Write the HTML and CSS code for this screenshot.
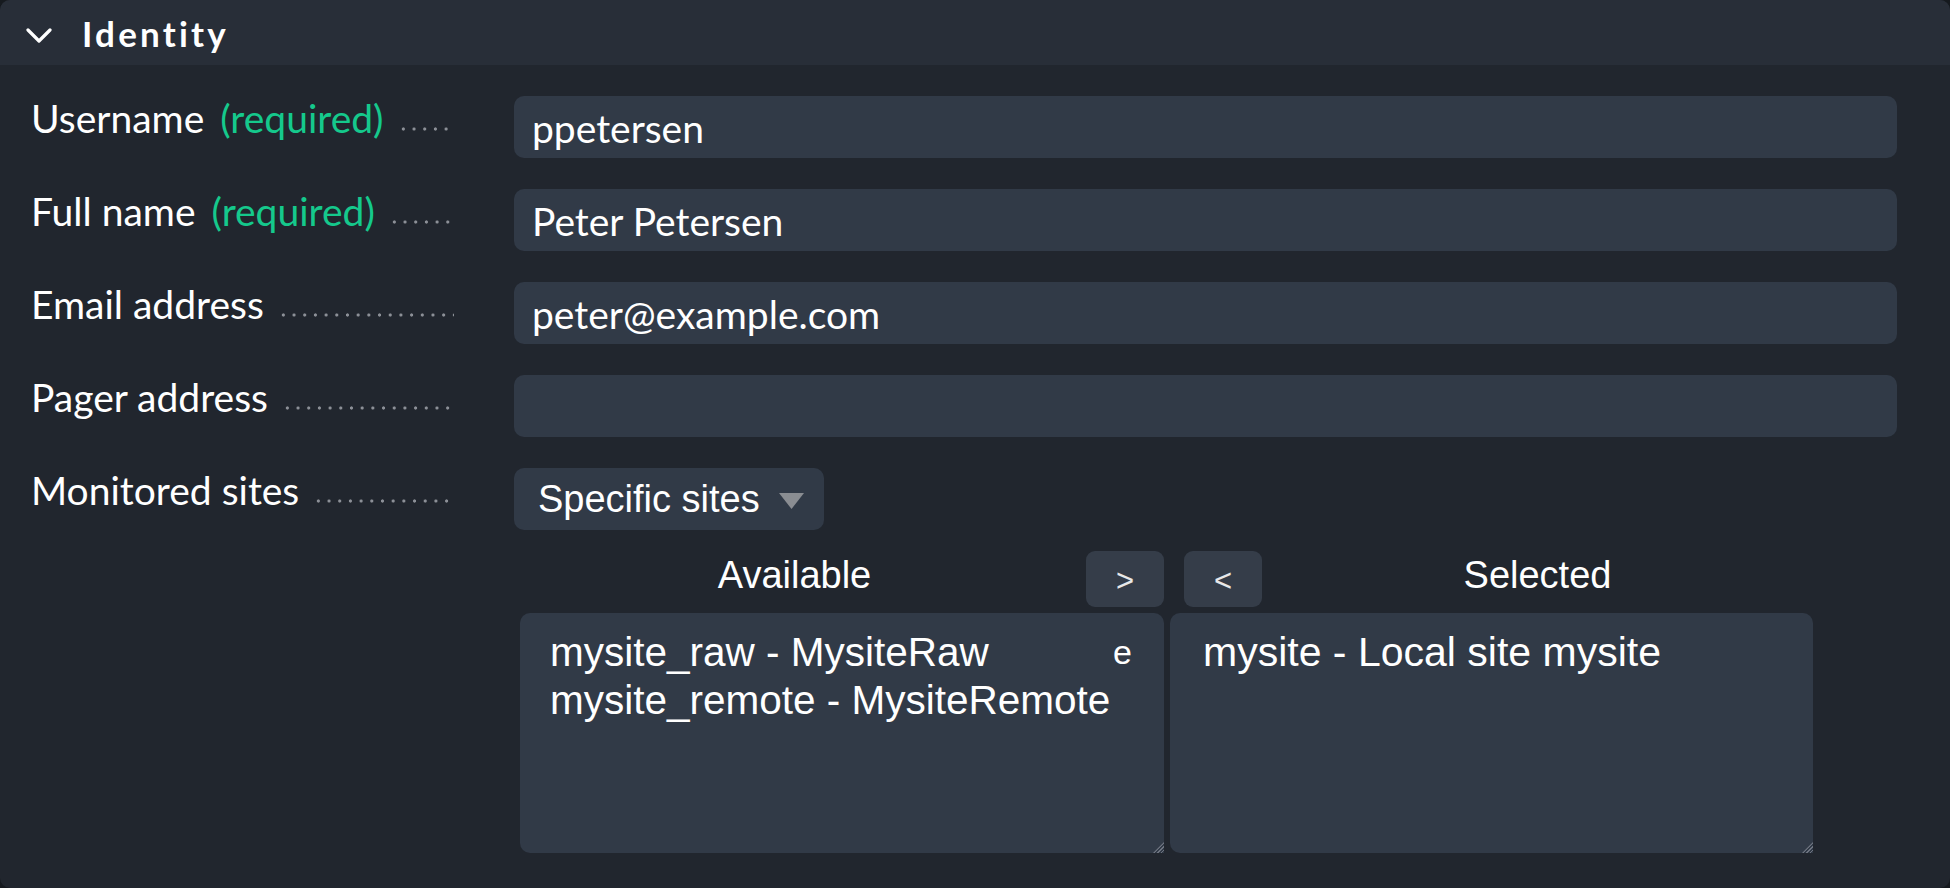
FILE: index.html
```html
<!DOCTYPE html>
<html>
<head>
<meta charset="utf-8">
<link rel="stylesheet" href="styles.css">
</head>
<body>
<div class="panel">
  <div class="head">
    <svg class="chev" width="26" height="16" viewBox="0 0 26 16"><polyline points="2,2 13,13 24,2" fill="none" stroke="#ffffff" stroke-width="3.2" stroke-linecap="round" stroke-linejoin="round"/></svg>
    <span class="title">Identity</span>
  </div>
  <div class="form">
    <div class="row">
      <div class="label"><span class="ltext">Username <span class="req">(required)</span></span><span class="dots"></span></div>
      <div class="field"><div class="input">ppetersen</div></div>
    </div>
    <div class="row">
      <div class="label"><span class="ltext">Full name <span class="req">(required)</span></span><span class="dots"></span></div>
      <div class="field"><div class="input">Peter Petersen</div></div>
    </div>
    <div class="row">
      <div class="label"><span class="ltext">Email address</span><span class="dots"></span></div>
      <div class="field"><div class="input">peter@example.com</div></div>
    </div>
    <div class="row">
      <div class="label"><span class="ltext">Pager address</span><span class="dots"></span></div>
      <div class="field"><div class="input"></div></div>
    </div>
    <div class="row">
      <div class="label"><span class="ltext">Monitored sites</span><span class="dots"></span></div>
      <div class="field">
        <div class="select"><span>Specific sites</span><svg class="caret" width="25" height="16" viewBox="0 0 25 16"><polygon points="0,0 25,0 12.5,16" fill="#8a8d92"/></svg></div>
        <div class="dual">
          <div class="col">
            <div class="colhead">
              <span class="htext avail">Available</span>
              <span class="btn">&gt;</span>
            </div>
            <div class="list">
              <div class="opt first"><span>mysite_raw - MysiteRaw</span><span class="stray">e</span></div>
              <div class="opt">mysite_remote - MysiteRemote</div>
            </div>
          </div>
          <div class="col">
            <div class="colhead">
              <span class="btn left">&lt;</span>
              <span class="htext">Selected</span>
            </div>
            <div class="list">
              <div class="opt">mysite - Local site mysite</div>
            </div>
          </div>
        </div>
      </div>
    </div>
  </div>
</div>
</body>
</html>
```
FILE: styles.css
```css
html, body {
  margin: 0;
  padding: 0;
  background: #161a1f;
}
body {
  width: 1950px;
  height: 888px;
  overflow: hidden;
}
.panel {
  width: 1950px;
  height: 888px;
  background: #21262e;
  border-radius: 10px;
  overflow: hidden;
  font-family: "Lato", "Liberation Sans", sans-serif;
  color: #ffffff;
}
.head {
  height: 65px;
  background: #282e38;
  display: flex;
  align-items: center;
  padding-left: 26px;
}
.chev {
  display: block;
  margin-top: 6px;
}
.title {
  margin-left: 30px;
  font-weight: 700;
  font-size: 35px;
  letter-spacing: 3.2px;
  line-height: 42px;
  margin-top: 0;
}
.form {
  padding: 31px 53px 0 31px;
  display: flex;
  flex-direction: column;
  gap: 31px;
}
.row {
  display: flex;
  align-items: flex-start;
}
.label {
  width: 423px;
  flex: none;
  margin-right: 60px;
  display: flex;
  font-size: 39px;
  line-height: 44px;
  white-space: nowrap;
}
.ltext {
  flex: none;
}
.req {
  color: #15c98c;
  margin-left: 6px;
}
.dots {
  flex: 1;
  margin-left: 14px;
  height: 44px;
  background-image: radial-gradient(circle, #8c9097 1.3px, transparent 1.9px);
  background-size: 10.7px 6px;
  background-repeat: repeat-x;
  background-position: 0 30px;
}
.field {
  flex: 1;
  min-width: 0;
}
.input {
  height: 62px;
  background: #313a47;
  border-radius: 10px;
  padding: 0 18px;
  display: flex;
  align-items: center;
  font-size: 39px;
  line-height: 44px;
  padding-top: 1px;
  box-sizing: border-box;
}
.select {
  width: 310px;
  height: 62px;
  box-sizing: border-box;
  background: #313a47;
  border-radius: 10px;
  display: flex;
  align-items: center;
  padding-left: 24px;
  font-family: "Liberation Sans", Arial, sans-serif;
  font-size: 38px;
  line-height: 44px;
}
.caret {
  margin-left: 19px;
  margin-top: 4px;
}
.dual {
  display: flex;
  gap: 6px;
  margin-top: 21px;
  margin-left: 6px;
  font-family: "Liberation Sans", Arial, sans-serif;
}
.col {
  display: flex;
  flex-direction: column;
  gap: 6px;
}
.col:first-child {
  width: 644px;
}
.col:last-child {
  width: 643px;
}
.colhead {
  height: 56px;
  display: flex;
  align-items: center;
}
.htext {
  flex: 1;
  text-align: center;
  font-size: 38px;
  line-height: 44px;
  margin-top: -8px;
}
.htext.avail {
  padding-right: 17px;
}
.btn {
  width: 78px;
  height: 56px;
  flex: none;
  background: #353d49;
  border-radius: 9px;
  display: flex;
  align-items: center;
  justify-content: center;
  font-size: 31px;
  color: #e8e8e8;
  padding-top: 3px;
  box-sizing: border-box;
}
.btn.left {
  margin-left: 14px;
}
.list {
  position: relative;
  height: 240px;
  box-sizing: border-box;
  background: #313a47;
  border-radius: 10px 10px 0 10px;
  padding: 15px 32px 0 30px;
  font-size: 40.5px;
  line-height: 48px;
  white-space: nowrap;
}
.col:last-child .list {
  padding-left: 33px;
  font-size: 41px;
}
.opt.first {
  display: flex;
}
.stray {
  margin-left: auto;
  font-size: 34px;
}
.list::after {
  content: "";
  position: absolute;
  right: 0;
  bottom: 0;
  width: 11px;
  height: 11px;
  background: repeating-linear-gradient(-45deg, transparent 0 1.5px, #6e7480 1.5px 2.6px);
  clip-path: polygon(100% 0, 100% 100%, 0 100%);
}
```
